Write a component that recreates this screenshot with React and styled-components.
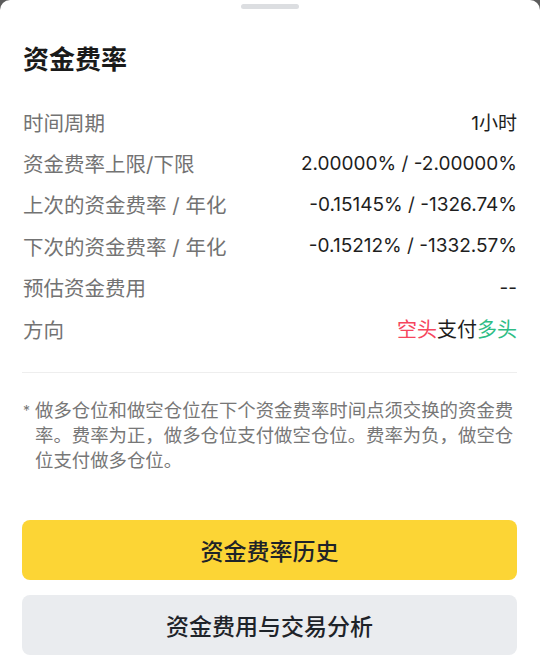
import styled, { createGlobalStyle } from "styled-components";

const GlobalStyle = createGlobalStyle`
  html, body {
    margin: 0;
    padding: 0;
    background: #5c5c5c;
  }
  body {
    font-family: Inter, "Noto Sans CJK SC", "Noto Sans", sans-serif;
    -webkit-font-smoothing: antialiased;
  }
`;

const Sheet = styled.div`
  width: 540px;
  height: 670px;
  box-sizing: border-box;
  background: #ffffff;
  border-radius: 10px 10px 0 0;
  padding: 4px 23px 0 22px;
  display: flex;
  flex-direction: column;
  overflow: hidden;
`;

const Handle = styled.div`
  align-self: center;
  width: 58px;
  height: 5px;
  border-radius: 3px;
  background: #dcdee1;
  margin-left: 1px;
`;

const Title = styled.h2`
  margin: 33px 0 0 1px;
  font-size: 26px;
  line-height: 36px;
  font-weight: 700;
  color: #1a1a1a;
`;

const List = styled.div`
  margin-top: 23px;
  display: flex;
  flex-direction: column;
`;

const Row = styled.div`
  height: 41.4px;
  display: flex;
  align-items: center;
  justify-content: space-between;
  padding-left: 1px;
`;

const Label = styled.span`
  font-size: 20.5px;
  color: #737373;
`;

const Value = styled.span`
  font-size: 19px;
  color: #1e1e1e;
`;

const Tone = styled.span`
  font-size: 20px;
  color: ${(p) => (p.$tone === "red" ? "#f6465d" : p.$tone === "green" ? "#2ebd85" : "#1e1e1e")};
`;

const Divider = styled.hr`
  margin: 23px 0 0;
  border: 0;
  height: 1px;
  background: #eeeeee;
`;

const Note = styled.p`
  margin: 25px 0 0;
  display: flex;
  gap: 5px;
  font-size: 18.4px;
  line-height: 25px;
  color: #777777;

  .star {
    font-size: 14px;
    line-height: 25px;
    padding-left: 1px;
  }
`;

const Actions = styled.div`
  margin-top: 47px;
  display: flex;
  flex-direction: column;
  gap: 15px;
`;

const Button = styled.button`
  height: 60px;
  border: 0;
  border-radius: 8px;
  font-family: inherit;
  font-size: 23px;
  font-weight: 500;
  color: #1e2329;
  background: ${(p) => (p.$primary ? "#fcd535" : "#eaecef")};
  cursor: pointer;
`;

const rows = [
  ["时间周期", "1小时"],
  ["资金费率上限/下限", "2.00000% / -2.00000%"],
  ["上次的资金费率 / 年化", "-0.15145% / -1326.74%"],
  ["下次的资金费率 / 年化", "-0.15212% / -1332.57%"],
  ["预估资金费用", "--"],
];

export default function App() {
  return (
    <>
      <GlobalStyle />
      <Sheet>
        <Handle />
        <Title>资金费率</Title>
        <List>
          {rows.map(([label, value]) => (
            <Row key={label}>
              <Label>{label}</Label>
              <Value>{value}</Value>
            </Row>
          ))}
          <Row>
            <Label>方向</Label>
            <Value>
              <Tone $tone="red">空头</Tone>
              <Tone>支付</Tone>
              <Tone $tone="green">多头</Tone>
            </Value>
          </Row>
        </List>
        <Divider />
        <Note>
          <span className="star">*</span>
          <span>
            做多仓位和做空仓位在下个资金费率时间点须交换的资金费率。费率为正，做多仓位支付做空仓位。费率为负，做空仓位支付做多仓位。
          </span>
        </Note>
        <Actions>
          <Button $primary>资金费率历史</Button>
          <Button>资金费用与交易分析</Button>
        </Actions>
      </Sheet>
    </>
  );
}
